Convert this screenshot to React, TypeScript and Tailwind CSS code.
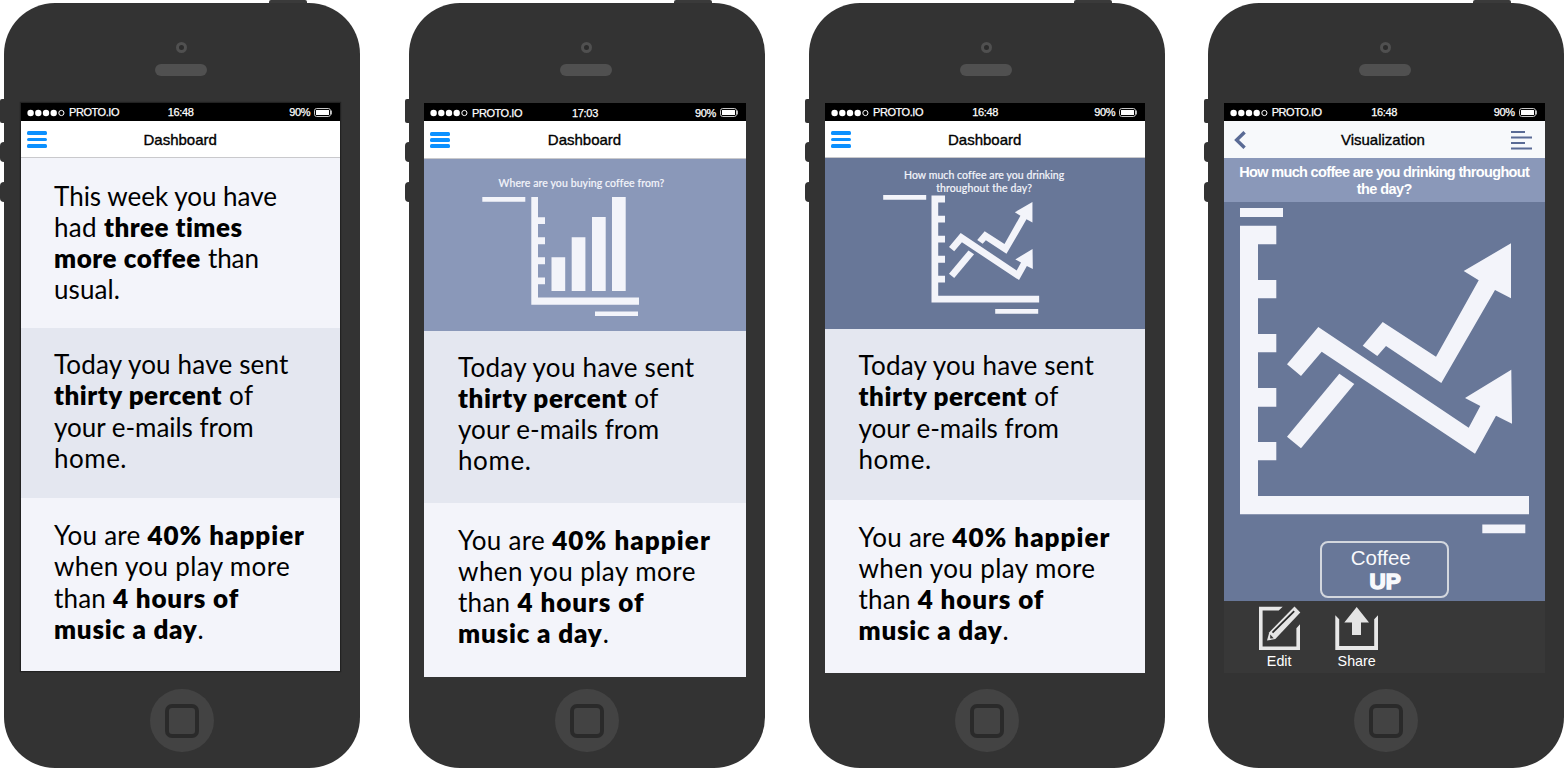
import { useLayoutEffect, useRef, useState, type ReactNode } from "react";

type Run = [text: string, width: number, bold?: boolean];

/* Text whose letter spacing is tuned so that it spans a given width. */
function Fit({ text, width, className = "" }: { text: string; width: number; className?: string }) {
  const ref = useRef<HTMLSpanElement>(null);
  const [spacing, setSpacing] = useState(0);
  useLayoutEffect(() => {
    const natural = ref.current!.getBoundingClientRect().width - spacing * text.length;
    setSpacing((width - natural) / text.length);
  }, [text, width]);
  return (
    <span ref={ref} className={`inline-block whitespace-pre ${className}`} style={{ letterSpacing: spacing }}>
      {text}
    </span>
  );
}

const WEEK: Run[][] = [
  [["This week you have", 223]],
  [["had", 43], ["three times", 139, true]],
  [["more coffee", 146, true], ["than", 51]],
  [["usual.", 66]],
];
const EMAILS: Run[][] = [
  [["Today you have sent", 234.5]],
  [["thirty percent", 168, true], ["of", 24.5]],
  [["your e-mails from", 199.5]],
  [["home.", 73]],
];
const MUSIC: Run[][] = [
  [["You are", 86.5], ["40% happier", 157.5, true]],
  [["when you play more", 236]],
  [["than", 52], ["4 hours of", 126, true]],
  [["music a day", 143.5, true], [".", 6.5]],
];

function Message({ lines, scale = 1, className }: { lines: Run[][]; scale?: number; className: string }) {
  return (
    <div className={`shrink-0 font-['Lato',sans-serif] text-[26px] leading-[31.1px] text-black ${className}`}>
      {lines.map((runs, i) => (
        <div key={i} className={`flex ${runs[1]?.[0] === "." ? "gap-0" : "gap-[7px]"}`}>
          {runs.map(([text, width, bold]) => (
            <Fit key={text} text={text} width={width * scale} className={bold ? "font-extrabold" : "font-normal"} />
          ))}
        </div>
      ))}
    </div>
  );
}

function StatusBar({ time, className = "h-[17.5px]" }: { time: string; className?: string }) {
  return (
    <div
      className={`grid shrink-0 grid-cols-3 items-center bg-black pr-[8px] pl-[6px] font-['Liberation_Sans',sans-serif] text-[11px] leading-[16px] text-white [-webkit-text-stroke:0.25px_white] ${className}`}
    >
      <div className="flex items-center gap-[4px]">
        <svg className="mt-px h-[8px] w-[38px]" viewBox="0 0 38 8">
          <g fill="#fff">
            <circle cx="3.6" cy="4" r="3.2" />
            <circle cx="11.3" cy="4" r="3.2" />
            <circle cx="19" cy="4" r="3.2" />
            <circle cx="26.7" cy="4" r="3.2" />
          </g>
          <circle cx="34.4" cy="4" r="2.6" fill="none" stroke="#fff" strokeWidth="1" />
        </svg>
        <Fit text="PROTO.IO" width={50} />
      </div>
      <div className="pl-[2px] text-center">
        <Fit text={time} width={26} />
      </div>
      <div className="flex items-center justify-end gap-[4px]">
        <Fit text="90%" width={21} />
        <svg className="h-[9px] w-[18px]" viewBox="0 0 18 9">
          <rect x="0.5" y="0.5" width="16" height="8" rx="2.2" fill="none" stroke="#c8c8c8" />
          <rect x="2" y="2" width="13" height="5" rx="0.3" fill="#fff" />
          <path d="M17.4 2.5v4" stroke="#c8c8c8" strokeWidth="1" />
        </svg>
      </div>
    </div>
  );
}

const TITLE =
  "pt-px font-['Liberation_Sans',sans-serif] text-[15px] leading-[20px] text-black [-webkit-text-stroke:0.35px_black]";

function DashboardBar() {
  return (
    <div className="grid h-[37.2px] shrink-0 grid-cols-[1fr_auto_1fr] items-center border-b border-[#c9c9cc] bg-white pr-[7px] pl-[6px]">
      <div className="flex w-[19.5px] flex-col gap-[2.5px] pt-px">
        <div className="h-[3.8px] rounded-[1.5px] bg-[#0b90ff]" />
        <div className="h-[3.8px] rounded-[1.5px] bg-[#0b90ff]" />
        <div className="h-[3.8px] rounded-[1.5px] bg-[#0b90ff]" />
      </div>
      <div className={TITLE}>Dashboard</div>
      <div />
    </div>
  );
}

function Phone({ className, screen, children }: { className: string; screen: string; children: ReactNode }) {
  return (
    <div className={`relative h-[768px] w-[356.5px] shrink-0 ${className}`}>
      <div className="absolute top-0 left-[265.5px] h-[8px] w-[38px] rounded-t-[2px] bg-[#3a3a3a]" />
      <div className="absolute top-[98.5px] left-[-3.5px] h-[24px] w-[8px] rounded-l-[2px] bg-[#333]" />
      <div className="absolute top-[142px] left-[-3.5px] h-[20px] w-[8px] rounded-l-[4px] bg-[#333]" />
      <div className="absolute top-[182px] left-[-3.5px] h-[20px] w-[8px] rounded-l-[4px] bg-[#333]" />
      <div className="relative mt-[3.3px] flex h-[764.7px] flex-col items-center rounded-[51px] bg-[#333]">
        <div className="mt-[38.7px] mr-px size-[11px] rounded-full border-[3px] border-[#505050] bg-[#2c2c2c]" />
        <div className="mt-[11px] mr-[1.5px] h-[12px] w-[52px] rounded-full bg-[#505050]" />
        <div className={`mt-[27.5px] flex flex-col self-start overflow-hidden ${screen}`}>{children}</div>
        <div className="mt-auto mb-[15.5px] flex size-[63.5px] items-center justify-center rounded-full bg-[#434343]">
          <div className="size-[34px] rounded-[7px] border-[4px] border-[#2a2a2a]" />
        </div>
      </div>
    </div>
  );
}

/* Axis, ticks and the two crossing arrows, drawn on a 289 x 289 field. */
function TrendShape() {
  return (
    <g>
      <path d="M0 0H36.3V18.6H18V54.3H36.3V72.6H18V108.3H36.3V126.6H18V162.3H36.3V181H18V216.3H36.3V234.6H18V270.3H289V288.6H0Z" />
      <path d="M271 17.6L223.7 45.3L238.7 54.6L196 131L142.7 96.3L122.7 120L137.3 130.3L146 120.3L201.3 157.3L255 64.3L271 72.6Z" />
      <path d="M78.3 101.3L47 138.6L61 150.3L81.7 126L235 228L256 190L272 198L271.3 144L225 172.3L240.3 180.3L228.7 202Z" />
      <path d="M99.3 148L114.3 158.3L61 222.6L47 211Z" />
    </g>
  );
}

const CAPTION =
  "font-['Lato',sans-serif] text-[10.5px] leading-[12.5px] text-[#f4f5fb] [-webkit-text-stroke:0.2px_#f4f5fb]";

export default function App() {
  return (
    <div className="flex h-[768px] w-[1564px] overflow-hidden bg-white">
      <Phone className="ml-[3.5px]" screen="ml-[17.5px] h-[567.5px] w-[319.3px] shadow-[0_0_1px_1px_#222]">
        <StatusBar time="16:48" />
        <DashboardBar />
        <Message lines={WEEK} className="h-[170px] bg-[#f3f4fa] pt-[23px] pl-[33px]" />
        <Message lines={EMAILS} className="h-[170px] bg-[#e4e7f0] pt-[21.2px] pl-[33px]" />
        <Message lines={MUSIC} className="h-[173px] bg-[#f3f4fa] pt-[22.2px] pl-[33px]" />
      </Phone>

      <Phone className="ml-[48.5px]" screen="ml-[15.5px] h-[573.5px] w-[322px]">
        <StatusBar time="17:03" className="h-[18px] pt-px" />
        <DashboardBar />
        <div className="flex h-[172.5px] shrink-0 flex-col items-center bg-[#8a98b9]">
          <div className={`mt-[18.5px] mr-[7px] ${CAPTION}`}>
            <Fit text="Where are you buying coffee from?" width={165.5} />
          </div>
          <svg className="mt-[7.3px] h-[120px] w-[322px] shrink-0" viewBox="0 0 322 120" fill="#f3f4fa">
            <path d="M58.3 0h43v4.7h-43z" />
            <path d="M107.3 0H114V20.3H121V27H114V40.3H121V47.2H114V60.3H121V67.2H114V80.5H121V87.3H114V100.6H215V107.7H107.3Z" />
            <path d="M127.5 60.3H141.2V94H127.5zM147.7 40.3H161.4V94H147.7zM168 20.1H181.7V94H168zM188 0H201.7V94H188z" />
            <path d="M171 114.4h43v4.6h-43z" />
          </svg>
        </div>
        <Message lines={EMAILS} scale={1.008} className="h-[172px] bg-[#e4e7f0] pt-[20.5px] pl-[34px]" />
        <Message lines={MUSIC} scale={1.008} className="h-[175px] bg-[#f3f4fa] pt-[21.8px] pl-[34px]" />
      </Phone>

      <Phone className="ml-[43.5px]" screen="ml-[16.5px] h-[569.5px] w-[320.3px]">
        <StatusBar time="16:48" />
        <DashboardBar />
        <div className="flex h-[171px] shrink-0 flex-col items-center bg-[#687798]">
          <div className={`mt-[11px] mr-[2px] flex flex-col items-center ${CAPTION}`}>
            <Fit text="How much coffee are you drinking" width={160} />
            <Fit text="throughout the day?" width={96} />
          </div>
          <svg className="mt-[1.3px] h-[120px] w-[320px] shrink-0" viewBox="0 0 320 120" fill="#f3f4fa">
            <path d="M58.2 0h43v4.7h-43z" />
            <g transform="translate(106.5 0.5) scale(0.3725 0.371)">
              <TrendShape />
            </g>
            <path d="M170.2 114h43v4.7h-43z" />
          </svg>
        </div>
        <Message lines={EMAILS} scale={1.004} className="h-[171px] bg-[#e4e7f0] pt-[21.2px] pl-[33.5px]" />
        <Message lines={MUSIC} scale={1.004} className="h-[173px] bg-[#f3f4fa] pt-[21.7px] pl-[33.5px]" />
      </Phone>

      <Phone className="ml-[42.5px]" screen="ml-[16.2px] h-[570px] w-[321px]">
        <StatusBar time="16:48" />
        <div className="grid h-[37.2px] shrink-0 grid-cols-[1fr_auto_1fr] items-center bg-[#f7f9fb] pr-[13px] pl-[10.5px]">
          <svg className="h-[18px] w-[12px]" viewBox="0 0 12 18" fill="none" stroke="#5a6b95" strokeWidth="3.4">
            <path d="M10.6 1.2L2.6 9L10.6 16.8" />
          </svg>
          <div className={TITLE}>Visualization</div>
          <svg className="h-[20px] w-[21px] justify-self-end" viewBox="0 0 21 20" fill="#5a6b95">
            <path d="M0 0.9h14v2H0zM0 6.4h21v2H0zM0 12h14v2H0zM0 17.6h21v2H0z" />
          </svg>
        </div>
        <div className="flex h-[44px] shrink-0 flex-col items-center bg-[#8a98b9] pt-[6px] font-['Liberation_Sans',sans-serif] text-[14.5px] leading-[16.5px] font-bold text-white">
          <Fit text="How much coffee are you drinking throughout" width={290} />
          <Fit text="the day?" width={55} />
        </div>
        <div className="flex h-[399px] shrink-0 flex-col items-center bg-[#687798]">
          <svg className="mt-[6px] h-[326px] w-[321px] shrink-0" viewBox="0 0 321 326" fill="#f3f4fa">
            <path d="M16 0h43v9h-43z" />
            <g transform="translate(16 17.7)">
              <TrendShape />
            </g>
            <path d="M258.3 316.5h43v8.7h-43z" />
          </svg>
          <div className="mt-[6.5px] flex h-[57px] w-[129px] flex-col items-center rounded-[8px] border-2 border-[#d3d7de] pt-[3px] pr-[7px] font-['Liberation_Sans',sans-serif] text-[20.5px] leading-[24px] text-[#f8f9fc]">
            <Fit text="Coffee" width={60} />
            <div className="ml-[9px] text-[22.5px] font-bold [-webkit-text-stroke:1.5px_#f8f9fc]">
              <Fit text="UP" width={31.5} />
            </div>
          </div>
        </div>
        <div className="flex flex-1 bg-[#383838] pt-[5px] pl-[34px] font-['Liberation_Sans',sans-serif] text-[14.3px] leading-[18px] text-white">
          <div className="flex w-[43px] flex-col items-center gap-[2px]">
            <svg className="h-[44px] w-[43px]" viewBox="0 0 43 44">
              <path d="M1 0.7H24.7L20.7 4.4H4.6V40.4H38.4V22.3L42 18.3V44H1Z" fill="#e8e8e8" />
              <path d="M36.5 0.4L42.3 6.6L17.3 33L9 34.6L11.3 26.2Z" fill="#e4e4e4" />
              <path d="M14.5 26.7L36.2 5.2" stroke="#262626" strokeWidth="1.8" />
              <path d="M12.2 28.4L15.7 32.2L12.2 32.6Z" fill="#383838" />
            </svg>
            Edit
          </div>
          <div className="ml-[34px] flex w-[44px] flex-col items-center gap-[2px]">
            <svg className="h-[44px] w-[44px]" viewBox="0 0 44 44">
              <path d="M0.3 9.3L4.2 13.3V40H39.2V13.3L43 9.3V44H0.3Z" fill="#e8e8e8" />
              <path d="M21.7 1L34 16.5H26V29H17V16.5H9.3Z" fill="#e4e4e4" />
            </svg>
            Share
          </div>
        </div>
      </Phone>
    </div>
  );
}
